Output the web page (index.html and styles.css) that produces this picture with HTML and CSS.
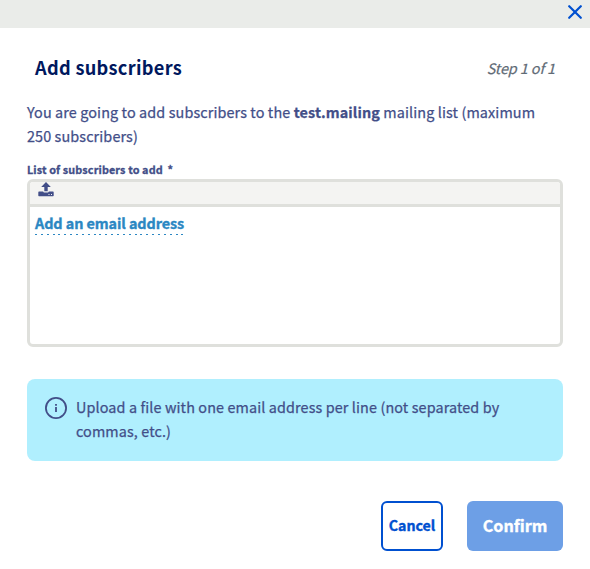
FILE: index.html
```
<!DOCTYPE html>
<html lang="en">
<head>
<meta charset="utf-8">
<title>Add subscribers</title>
<link rel="stylesheet" href="styles.css">
</head>
<body>
<div class="modal">
  <div class="topbar">
    <svg class="close" viewBox="0 0 14 14"><path d="M1.2 1.2 12.8 12.8M12.8 1.2 1.2 12.8"/></svg>
  </div>
  <header class="header">
    <h1 class="title">Add subscribers</h1>
    <span class="step">Step 1 of 1</span>
  </header>
  <main class="content">
    <p class="intro">You are going to add subscribers to the <strong>test.mailing</strong> mailing list (maximum<br>250 subscribers)</p>
    <div class="label">List of subscribers to add <span class="required">*</span></div>
    <div class="editor">
      <div class="toolbar">
        <svg class="upload" viewBox="0 0 16 15"><path d="M8 0 12.8 5H9.7V9.3H6.3V5H3.2ZM1 9.6H5.2Q5.2 10.4 6 10.4H10Q10.8 10.4 10.8 9.6H15Q15.7 9.6 15.7 10.4V13.4Q15.7 14.2 15 14.2H1Q.3 14.2 .3 13.4V10.4Q.3 9.6 1 9.6Z"/><path class="dots" d="M10.5 12h1v1h-1zM13 12h1v1h-1z"/></svg>
      </div>
      <div class="entries"><a class="add">Add an email address</a></div>
    </div>
    <div class="notice">
      <svg class="info" viewBox="0 0 22 22"><circle cx="11" cy="11" r="10.1"/><path d="M10.1 7.1h1.8v1.7h-1.8zM10.1 10h1.8v5h-1.8z"/></svg>
      <p class="notice-text">Upload a file with one email address per line (not separated by<br>commas, etc.)</p>
    </div>
  </main>
  <footer class="actions">
    <button class="button cancel">Cancel</button>
    <button class="button confirm">Confirm</button>
  </footer>
</div>
</body>
</html>
```
FILE: styles.css
```
* { box-sizing: border-box; }
body {
  margin: 0;
  background: #fff;
  color: #424e88;
  font-family: "Noto Sans CJK SC", "Noto Sans", sans-serif;
  font-size: 14.4px;
  line-height: 24px;
  white-space: nowrap;
}
h1, p { margin: 0; }
svg { display: block; }
.modal { height: 569px; overflow: hidden; }
.topbar {
  height: 28px;
  background: #eaece9;
  display: flex;
  justify-content: flex-end;
  padding: 5px 8px 0 0;
}
.close { width: 14px; height: 14px; fill: none; stroke: #0050d0; stroke-width: 2.2; stroke-linecap: round; }
.header {
  display: flex;
  justify-content: space-between;
  align-items: flex-start;
  height: 72px;
  padding: 27px 35px 0;
}
.title { color: #00185e; font-size: 18.2px; font-weight: 700; letter-spacing: .3px; }
.step { margin-top: 1px; color: #5f6b76; font-style: italic; letter-spacing: -.1px; -webkit-text-stroke: .2px; }
.content { padding: 0 27px; }
.intro, .notice-text { letter-spacing: .11px; -webkit-text-stroke: .25px; }
strong { font-weight: 700; }
.label { margin-top: 13px; height: 18px; line-height: 16px; font-size: 10.8px; font-weight: 700; letter-spacing: .13px; -webkit-text-stroke: .3px; }
.required { margin-left: 2px; }
.editor { height: 168px; border: 3px solid #dfe0dc; border-radius: 6px; overflow: hidden; }
.toolbar { height: 25px; background: #f4f4f2; border-bottom: 3px solid #dfe0dc; padding-left: 8px; }
.upload { width: 16px; height: 15px; fill: #424e88; }
.upload .dots { fill: #f4f4f2; }
.entries { padding: 4px 5px; }
.add {
  display: inline-block;
  height: 24px;
  color: #2b87c3;
  font-weight: 700;
  letter-spacing: -.08px;
  -webkit-text-stroke: .35px;
  background: repeating-linear-gradient(90deg, #2b87c3 0 2px, transparent 2px 5.86px) bottom / 100% 1px no-repeat;
}
.notice {
  display: flex;
  gap: 9px;
  margin-top: 32px;
  height: 82px;
  border-radius: 8px;
  background: #b0effe;
  padding: 16px 18px;
}
.info { width: 22px; height: 22px; margin-top: 2px; fill: #424e88; }
.info circle { fill: none; stroke: #424e88; stroke-width: 1.8; }
.actions { display: flex; justify-content: flex-end; gap: 24px; padding: 40px 27px 0; }
.button {
  height: 50px;
  padding: 0 0 2px;
  border: 0;
  border-radius: 6px;
  font-family: inherit;
  font-weight: 700;
  line-height: 24px;
  -webkit-text-stroke: .35px;
}
.cancel { width: 62px; border: 2px solid #0050d0; background: #fff; color: #0050d0; font-size: 14.2px; }
.confirm { width: 96px; background: #6d9fe6; color: #fff; font-size: 16.2px; }
```
